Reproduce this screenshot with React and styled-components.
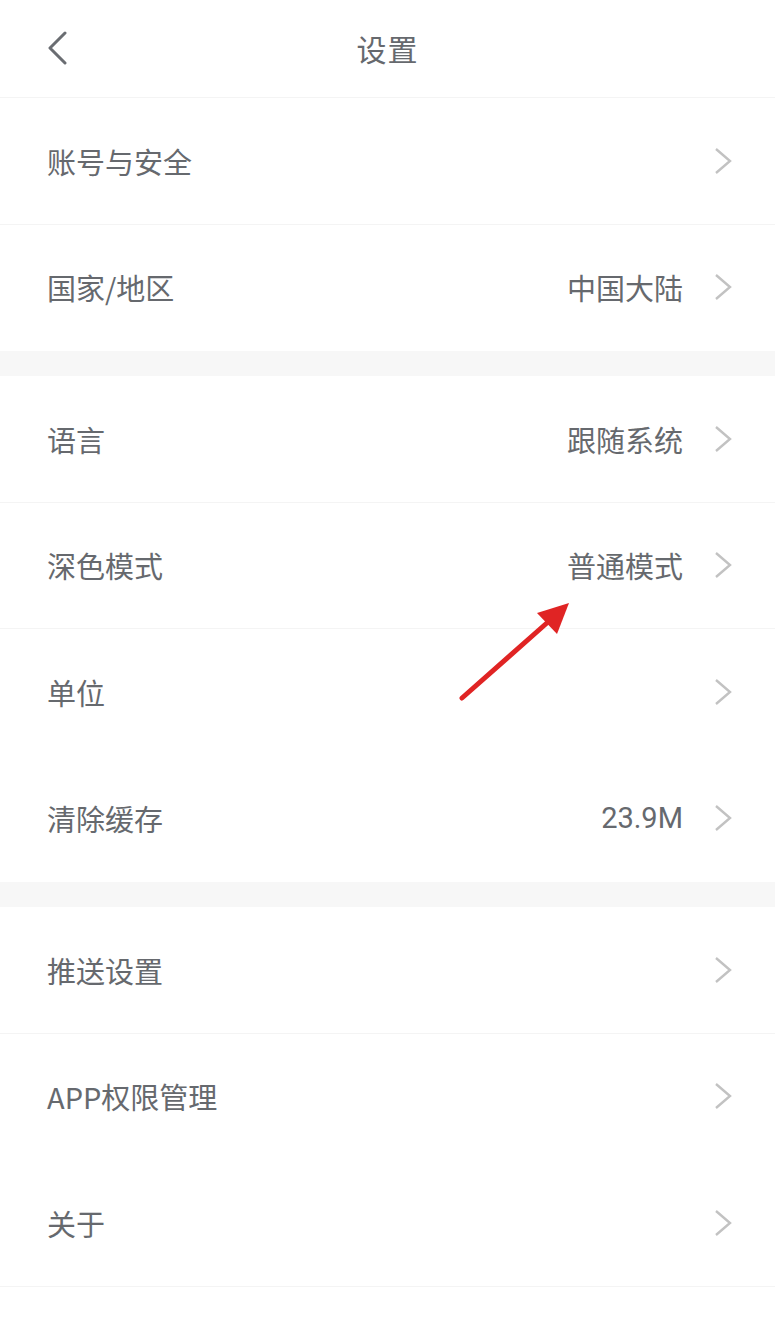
import styled, { createGlobalStyle } from "styled-components";

const GlobalStyle = createGlobalStyle`
  html, body {
    margin: 0;
    padding: 0;
    background: #fff;
  }
  body {
    font-family: "Noto Sans CJK SC", "Noto Sans", sans-serif;
  }
`;

const Page = styled.div`
  position: relative;
  width: 775px;
  min-height: 1323px;
  background: #fff;
  color: #66696e;
`;

const Header = styled.div`
  height: 98px;
  box-sizing: border-box;
  display: flex;
  align-items: center;
  justify-content: center;
  position: relative;
  border-bottom: 1px solid #f4f4f4;
`;

const BackButton = styled.div`
  position: absolute;
  left: 44px;
  top: 30px;
  width: 26px;
  height: 36px;
  display: flex;
  align-items: center;
  justify-content: center;
`;

const Title = styled.div`
  font-size: 30px;
  color: #66696e;
  letter-spacing: 1px;
  margin-top: -2px;
`;

const Group = styled.div`
  background: #fff;
`;

const Gap = styled.div`
  height: 25px;
  background: #f7f7f7;
`;

const Row = styled.div`
  height: 126.5px;
  box-sizing: border-box;
  display: flex;
  align-items: center;
  padding: 0 42px 0 47px;
  border-bottom: 1px solid ${(p) => (p.$noLine ? "transparent" : "#f4f4f4")};
`;

const Label = styled.div`
  flex: 1;
  font-size: 29px;
  color: #66696e;
`;

const Value = styled.div`
  font-size: 29px;
  color: #66696e;
  margin-right: 30px;
  font-family: ${(p) => (p.$latin ? `"Roboto", "Noto Sans CJK SC", sans-serif` : "inherit")};
`;

const Overlay = styled.svg`
  position: absolute;
  left: 0;
  top: 0;
  pointer-events: none;
`;

function Chevron() {
  return (
    <svg width="20" height="28" viewBox="0 0 20 28">
      <path d="M3 2 L17 14 L3 26" fill="none" stroke="#c2c2c2" strokeWidth="2.4" strokeLinejoin="miter" />
    </svg>
  );
}

function BackIcon() {
  return (
    <svg width="22" height="34" viewBox="0 0 22 34">
      <path d="M19 2 L4 17 L19 32" fill="none" stroke="#6a6d72" strokeWidth="3" strokeLinecap="round" strokeLinejoin="round" />
    </svg>
  );
}

function Item({ label, value, latin, noLine }) {
  return (
    <Row $noLine={noLine}>
      <Label>{label}</Label>
      {value && <Value $latin={latin}>{value}</Value>}
      <Chevron />
    </Row>
  );
}

export default function App() {
  return (
    <Page>
      <GlobalStyle />
      <Header>
        <BackButton>
          <BackIcon />
        </BackButton>
        <Title>设置</Title>
      </Header>
      <Group>
        <Item label="账号与安全" />
        <Item label="国家/地区" value="中国大陆" noLine />
      </Group>
      <Gap />
      <Group>
        <Item label="语言" value="跟随系统" />
        <Item label="深色模式" value="普通模式" />
        <Item label="单位" noLine />
        <Item label="清除缓存" value="23.9M" latin noLine />
      </Group>
      <Gap />
      <Group>
        <Item label="推送设置" />
        <Item label="APP权限管理" noLine />
        <Item label="关于" />
      </Group>
      <Overlay width="775" height="1323" viewBox="0 0 775 1323">
        <line x1="462" y1="698" x2="548" y2="622" stroke="#e02424" strokeWidth="5" strokeLinecap="round" />
        <polygon points="569,603 537,613 557,634" fill="#e02424" />
      </Overlay>
    </Page>
  );
}
